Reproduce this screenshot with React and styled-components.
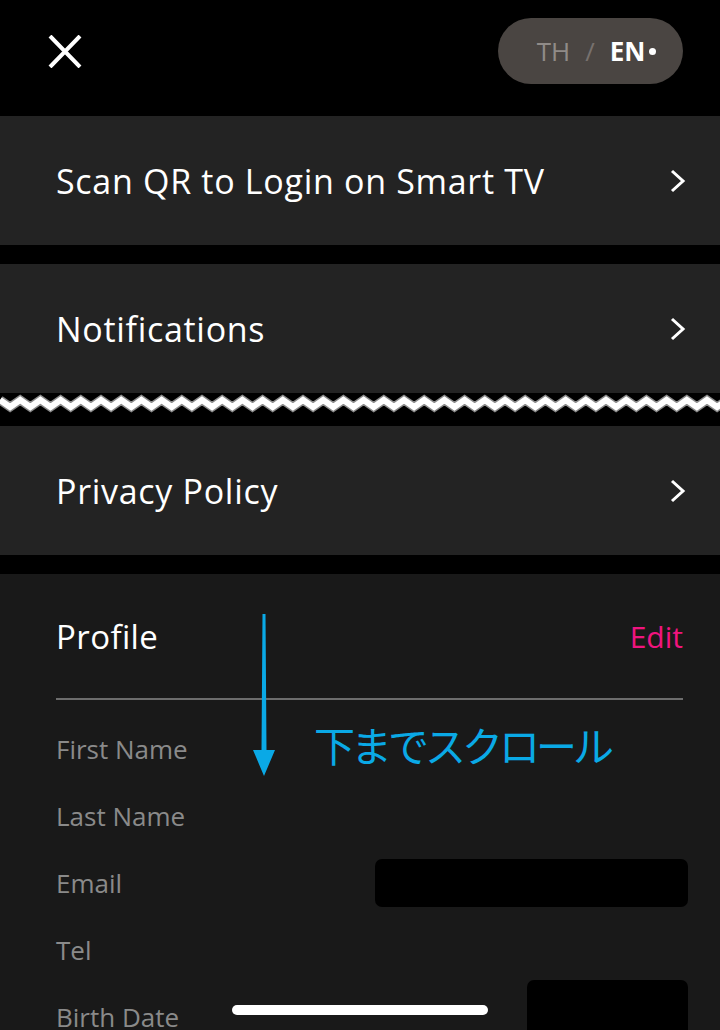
import styled, { createGlobalStyle } from "styled-components";

const GlobalStyle = createGlobalStyle`
  html, body {
    margin: 0;
    padding: 0;
    background: #000;
  }
  body {
    font-family: "Open Sans", "Noto Sans", sans-serif;
    -webkit-font-smoothing: antialiased;
  }
`;

const Page = styled.div`
  position: relative;
  width: 720px;
  height: 1030px;
  overflow: hidden;
  background: #000;
  display: flex;
  flex-direction: column;

  & > * {
    flex-shrink: 0;
  }
`;

const Header = styled.header`
  display: flex;
  align-items: center;
  justify-content: space-between;
  height: 102px;
  margin-bottom: 14px;
  padding: 0 37px 0 48px;
`;

const CloseButton = styled.button`
  display: flex;
  padding: 0;
  border: 0;
  background: none;
  cursor: pointer;
`;

const LangPill = styled.div`
  display: flex;
  align-items: center;
  justify-content: center;
  gap: 15px;
  width: 185px;
  height: 66px;
  padding-left: 12px;
  box-sizing: border-box;
  border-radius: 33px;
  background: #4a4542;
  font-size: 26px;
  line-height: 1;
`;

const Lang = styled.span`
  color: ${(p) => (p.$active ? "#fff" : "#908b88")};
  font-weight: ${(p) => (p.$active ? 700 : 400)};
  display: flex;
  align-items: center;
  gap: 4px;
`;

const Slash = styled.span`
  color: #77716e;
`;

const Dot = styled.span`
  width: 7px;
  height: 7px;
  border-radius: 50%;
  background: #fff;
`;

const Menu = styled.div`
  display: flex;
  flex-direction: column;

  & > * {
    flex-shrink: 0;
  }
`;

const MenuRow = styled.div`
  display: flex;
  align-items: center;
  justify-content: space-between;
  height: 129px;
  padding: 0 34px 0 56px;
  background: #232323;
  color: #fff;
  font-size: 34px;
  font-weight: 500;
  letter-spacing: 0.7px;
  margin-bottom: ${(p) => (p.$joined ? "0" : "19px")};
`;

const Zigzag = styled.div`
  display: flex;
  height: 33px;
  background: #000;
`;

const Profile = styled.section`
  flex: 1 0 auto;
  background: #191919;
  padding: 0 37px 0 56px;
`;

const ProfileHeader = styled.div`
  display: flex;
  align-items: center;
  justify-content: space-between;
  height: 124px;
  border-bottom: 2px solid #6d6d6d;
`;

const ProfileTitle = styled.h2`
  margin: 0;
  color: #fff;
  font-size: 33px;
  font-weight: 500;
  letter-spacing: 0.4px;
`;

const EditLink = styled.span`
  color: #f0147f;
  font-size: 30px;
  font-weight: 500;
`;

const Fields = styled.div`
  display: flex;
  flex-direction: column;
  padding-top: 15px;
`;

const FieldRow = styled.div`
  display: flex;
  align-items: center;
  justify-content: space-between;
  height: 67px;
`;

const FieldLabel = styled.span`
  color: #8a8a8a;
  font-size: 26px;
`;

const Redacted = styled.div`
  width: ${(p) => p.$w}px;
  height: ${(p) => p.$h}px;
  margin-right: -5px;
  border-radius: 7px;
  background: #000;
  margin-top: ${(p) => p.$top || 0}px;
`;

const ScrollNote = styled.div`
  position: absolute;
  left: 252px;
  top: 612px;
  display: flex;
  align-items: flex-end;
  gap: 38px;
`;

const NoteText = styled.span`
  color: #0aa9e6;
  font-family: "Noto Sans CJK JP", sans-serif;
  font-size: 41px;
  letter-spacing: -4px;
  line-height: 1;
  margin-bottom: 12px;
`;

const HomeIndicator = styled.div`
  position: absolute;
  left: 232px;
  top: 1005px;
  width: 256px;
  height: 10px;
  border-radius: 5px;
  background: #fff;
`;

const Chevron = () => (
  <svg width="16" height="24" viewBox="0 0 16 24">
    <path d="M2 2 L13 12 L2 22" fill="none" stroke="#fff" strokeWidth="3" />
  </svg>
);

const ZigzagLine = () => {
  const period = 20.2;
  const pts = [];
  for (let i = 0; i <= 72; i++) {
    pts.push(`${(i * period) / 2},${i % 2 === 0 ? 7 : 14}`);
  }
  const d = pts.join(" ");
  return (
    <svg width="720" height="33" viewBox="0 0 720 33">
      <polyline points={d} fill="none" stroke="#8a8a8a" strokeWidth="9" />
      <polyline points={d} fill="none" stroke="#fff" strokeWidth="6" />
    </svg>
  );
};

const menu = ["Scan QR to Login on Smart TV", "Notifications", "Privacy Policy"];

const fields = [
  { label: "First Name" },
  { label: "Last Name" },
  { label: "Email", box: { w: 313, h: 48 } },
  { label: "Tel" },
  { label: "Birth Date", box: { w: 161, h: 60, top: -14 } },
];

export default function App() {
  return (
    <Page>
      <GlobalStyle />
      <Header>
        <CloseButton aria-label="Close">
          <svg width="34" height="33" viewBox="0 0 34 33">
            <path d="M2 1 L32 32 M32 1 L2 32" stroke="#fff" strokeWidth="4" />
          </svg>
        </CloseButton>
        <LangPill>
          <Lang>TH</Lang>
          <Slash>/</Slash>
          <Lang $active>
            EN
            <Dot />
          </Lang>
        </LangPill>
      </Header>

      <Menu>
        <MenuRow>
          {menu[0]}
          <Chevron />
        </MenuRow>
        <MenuRow $joined>
          {menu[1]}
          <Chevron />
        </MenuRow>
        <Zigzag>
          <ZigzagLine />
        </Zigzag>
        <MenuRow>
          {menu[2]}
          <Chevron />
        </MenuRow>
      </Menu>

      <Profile>
        <ProfileHeader>
          <ProfileTitle>Profile</ProfileTitle>
          <EditLink>Edit</EditLink>
        </ProfileHeader>
        <Fields>
          {fields.map((f) => (
            <FieldRow key={f.label}>
              <FieldLabel>{f.label}</FieldLabel>
              {f.box && <Redacted $w={f.box.w} $h={f.box.h} $top={f.box.top} />}
            </FieldRow>
          ))}
        </Fields>
      </Profile>

      <ScrollNote>
        <svg width="24" height="165" viewBox="0 0 24 165">
          <path d="M10.5 2 L13.5 2 L14.5 138 L23 138 L12 164 L1 138 L9.5 138 Z" fill="#0aa9e6" />
        </svg>
        <NoteText>下までスクロール</NoteText>
      </ScrollNote>

      <HomeIndicator />
    </Page>
  );
}
